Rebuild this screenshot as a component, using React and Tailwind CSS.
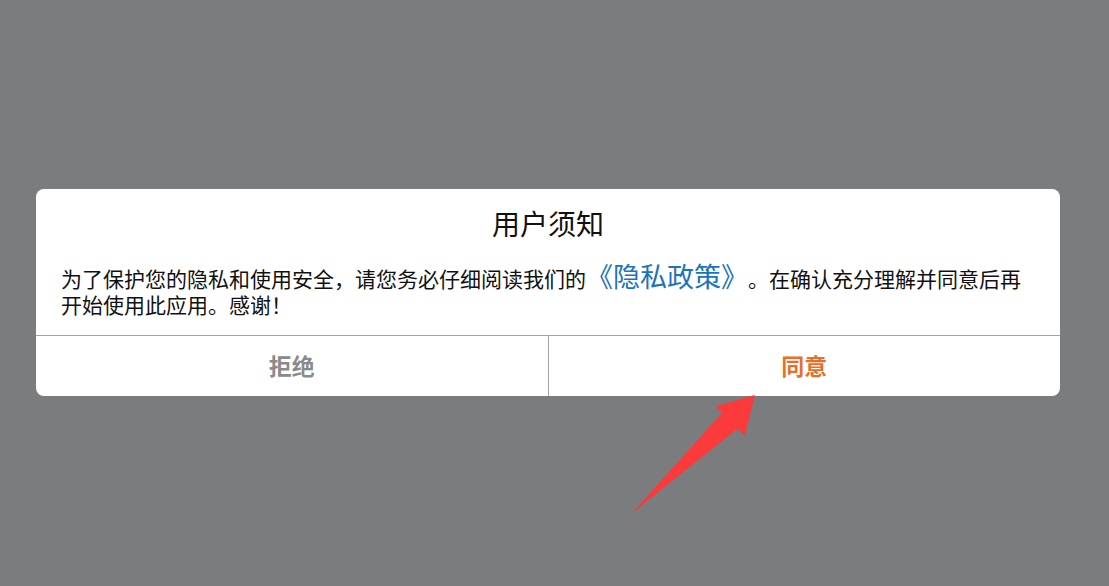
export default function App() {
  const font = { fontFamily: '"Noto Sans CJK SC", "Noto Sans", sans-serif' };
  return (
    <div className="relative w-[1109px] h-[586px] bg-[#7b7c7e] flex items-center pb-[2px]" style={font}>
      <div className="ml-[36px] w-[1024px] bg-white rounded-[8px] overflow-hidden">
        <div className="pt-[16px] text-center text-[28px] leading-[36px] text-[#111]">用户须知</div>
        <div className="px-[25px] pt-[22px] pb-[18px] text-[21px] leading-[26px] text-[#111] [text-spacing-trim:space-all]">
          为了保护您的隐私和使用安全，请您务必仔细阅读我们的<span className="text-[#1a73bb] text-[27px] leading-[26px]">《隐私政策》</span>。在确认充分理解并同意后再<br />开始使用此应用。感谢！
        </div>
        <div className="flex border-t border-[#a3a3a3] h-[61px]">
          <div className="flex-1 flex items-center justify-center text-[23px] font-bold text-[#8a8a8a]">拒绝</div>
          <div className="w-px bg-[#a3a3a3]"></div>
          <div className="flex-1 flex items-center justify-center text-[23px] font-bold text-[#e6702a]">同意</div>
        </div>
      </div>
      <svg className="absolute left-0 top-0 pointer-events-none" width="1109" height="586" viewBox="0 0 1109 586">
        <polygon points="755,395 716,406 722,413 632,513 737,429 745,435" fill="#fb3b3b" />
      </svg>
    </div>
  );
}
